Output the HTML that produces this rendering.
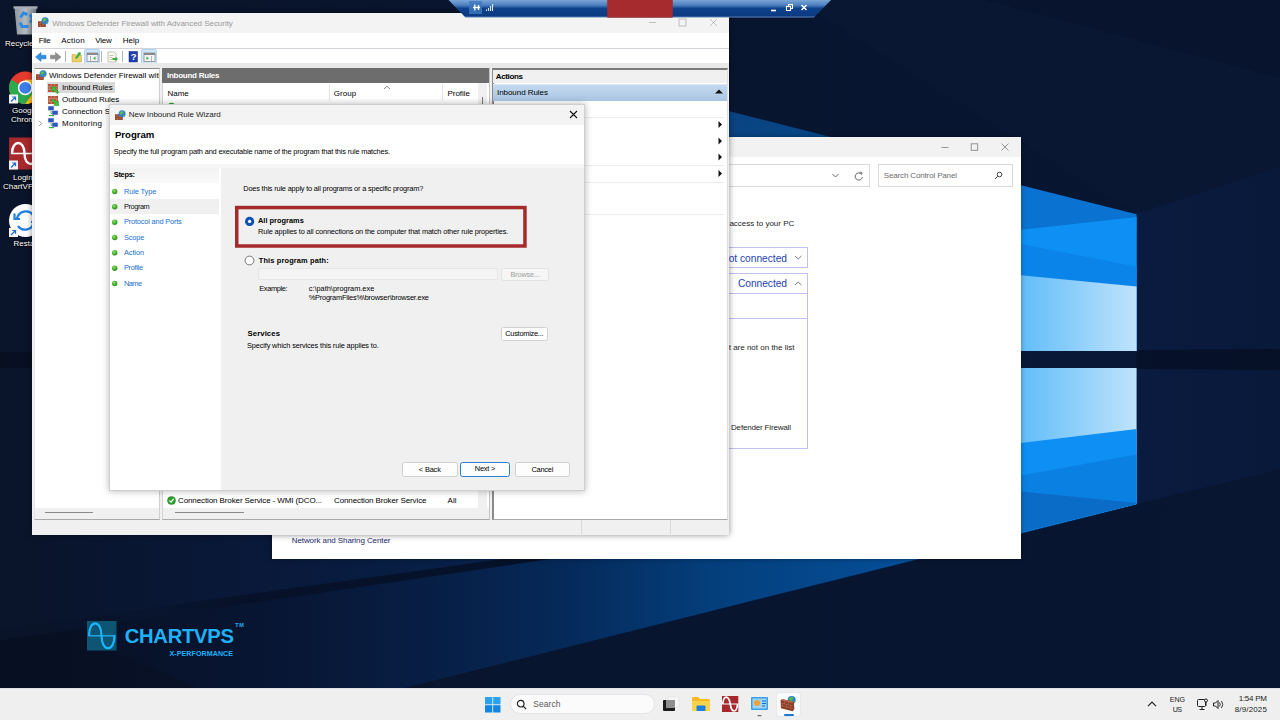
<!DOCTYPE html>
<html lang="en">
<head>
<meta charset="utf-8">
<title>Windows Defender Firewall - New Inbound Rule Wizard</title>
<style>
*{box-sizing:border-box;margin:0;padding:0}
html,body{width:1280px;height:720px;overflow:hidden;background:#0a152c}
body{position:relative;font-family:"Liberation Sans","DejaVu Sans",sans-serif;font-size:8px;color:#000;line-height:1}
.abs,.t,.d,.b{position:absolute}
.t{white-space:nowrap;line-height:10px;height:10px;font-size:8px;color:#000}
.d{font-size:7.4px;letter-spacing:-0.1px}
.b{font-weight:bold}
#wall{position:absolute;left:0;top:0}
/* firewall window */
#fw{position:absolute;left:32px;top:13px;width:697px;height:521.500px;background:#fff;box-shadow:0 0 6px rgba(0,0,0,.45)}
#cp{position:absolute;left:272px;top:137px;width:749px;height:422px;background:#fff;box-shadow:0 0 5px rgba(0,0,0,.35)}
#wz{position:absolute;left:109px;top:104px;width:476px;height:387px;background:#fff;box-shadow:0 0 7px rgba(0,0,0,.3);border:1px solid #cfcfcf}
#tb{position:absolute;left:0;top:688px;width:1280px;height:32px;background:#efefef}
.btn{position:absolute;border:1px solid #adadad;background:#e1e1e1;border-radius:2.500px;text-align:center;font-size:7.4px;line-height:13px;color:#000}
</style>
</head>
<body>
<!--WALL-->
<svg id="wall" width="1280" height="720" viewBox="0 0 1280 720">
<defs>
<linearGradient id="gbase" x1="0" y1="0" x2="1" y2="0"><stop offset="0" stop-color="#0a142a"/><stop offset=".5" stop-color="#08152f"/><stop offset="1" stop-color="#081631"/></linearGradient>
<linearGradient id="gbeamU" gradientUnits="userSpaceOnUse" x1="0" y1="0" x2="1021" y2="0"><stop offset="0" stop-color="#0a142a"/><stop offset=".4" stop-color="#09152d"/><stop offset=".6" stop-color="#0a2a5a"/><stop offset=".72" stop-color="#0a4482"/><stop offset=".82" stop-color="#054686"/><stop offset="1" stop-color="#04356f"/></linearGradient>
<linearGradient id="gbeamL" gradientUnits="userSpaceOnUse" x1="0" y1="0" x2="1136" y2="0"><stop offset="0" stop-color="#0a142a"/><stop offset=".24" stop-color="#09193a"/><stop offset=".4" stop-color="#072048"/><stop offset=".5" stop-color="#052a5a"/><stop offset=".63" stop-color="#043f7c"/><stop offset=".77" stop-color="#054c94"/><stop offset=".9" stop-color="#0762b8"/><stop offset="1" stop-color="#0a6cc8"/></linearGradient>
<linearGradient id="gp1" x1="0" y1="0" x2="1" y2="0"><stop offset="0" stop-color="#62bdf9"/><stop offset="1" stop-color="#bfe3fc"/></linearGradient>
<linearGradient id="gcone" gradientUnits="userSpaceOnUse" x1="1136" y1="0" x2="1280" y2="0"><stop offset="0" stop-color="#091b3f"/><stop offset="1" stop-color="#09193a"/></linearGradient>
</defs>
<rect width="1280" height="720" fill="url(#gbase)"/>
<!-- faint rays -->
<polygon points="796,0 1280,0 1280,167 1136,214" fill="#0a1936" opacity=".6"/>
<polygon points="985,0 1280,0 1280,78" fill="#07122a" opacity=".5"/>
<polygon points="1136,214 1280,167 1280,469 1136,504" fill="url(#gcone)"/>

<polygon points="0,340 1021,351 1280,349 1280,370 1021,368 0,377" fill="#050c1c" opacity=".6"/>
<!-- upper beam from logo top-left going up-left -->
<polygon points="0,-73.500 1021,185.200 1021,352 0,352" fill="url(#gbeamU)"/>
<!-- lower beam -->
<polygon points="1136.500,504.500 1021,368 0,368 0,600 272,721" fill="url(#gbeamL)"/>
<linearGradient id="gstripe" gradientUnits="userSpaceOnUse" x1="0" y1="0" x2="600" y2="0"><stop offset="0" stop-color="#050d1f" stop-opacity=".1"/><stop offset=".25" stop-color="#050d1f" stop-opacity=".25"/><stop offset=".4" stop-color="#050d1f" stop-opacity=".6"/><stop offset="1" stop-color="#050d1f" stop-opacity=".85"/></linearGradient>
<polygon points="502.500,559 551,559 0,640.300 0,628.800" fill="url(#gstripe)"/>
<linearGradient id="gdarkbl" gradientUnits="userSpaceOnUse" x1="0" y1="0" x2="460" y2="0"><stop offset="0" stop-color="#040a1a" stop-opacity=".5"/><stop offset="1" stop-color="#040a1a" stop-opacity="0"/></linearGradient>
<polygon points="0,640.300 460,572.400 460,721 0,721" fill="url(#gdarkbl)"/>
<!-- logo panes -->
<polygon points="1021,185.200 1136.600,214.300 1136.600,351 1021,351" fill="#0a72d0"/>
<polygon points="1021,229.700 1136.600,217 1136.600,351 1021,351" fill="#0d8ff4"/>
<polygon points="1021,244 1136.600,266.700 1136.600,351 1021,351" fill="#0a84e8"/>
<polygon points="1021,275.200 1136.600,286.600 1136.600,351 1021,351" fill="url(#gp1)"/>
<rect x="1021" y="351" width="115.600" height="17" fill="#0a1838"/>
<polygon points="1021,368 1136.600,368 1136.600,504 1021,532.500" fill="url(#gp1)"/>
<polygon points="1021,443 1136.600,428.900 1136.600,504 1021,532.500" fill="#0d8ff4"/>
<polygon points="1021,475.600 1136.600,454.500 1136.600,504 1021,532.500" fill="#0a80e2"/>
<polygon points="1021,491.500 1136.600,503 1136.600,504 1021,532.500" fill="#0a6cc6"/>
</svg>
<!--/WALL-->
<!--ICONS-->
<!-- desktop icons -->
<svg class="abs" style="left:0;top:0" width="60" height="260" viewBox="0 0 60 260">
 <defs><linearGradient id="gbin" x1="0" y1="0" x2="1" y2="0"><stop offset="0" stop-color="#8d959e"/><stop offset=".5" stop-color="#b4bac2"/><stop offset="1" stop-color="#7c848e"/></linearGradient></defs>
 <path d="M14.500 8h22l-2.500 26.500h-17z" fill="url(#gbin)"/>
 <rect x="13.500" y="6.300" width="24" height="2.300" fill="#aab0b8"/>
 <path d="M20.500 17.500l3-4.500l4 1.500M30 14.500l3 5l-3 3M28.500 26.500h-6.500l-2-4" stroke="#2c8ae0" stroke-width="3" fill="none"/>
 <!-- chrome -->
 <circle cx="25.200" cy="87.800" r="16.200" fill="#e33b2e"/>
 <path d="M25.200 87.800L11.200 79.700A16.200 16.200 0 0 0 25.200 104L33.300 92.500z" fill="#2da94f"/>
 <path d="M25.200 87.800L33.300 92.500L25.200 104A16.200 16.200 0 0 0 39.200 79.700L25.200 79.700z" fill="#fcc31c"/>
 <circle cx="25.200" cy="87.800" r="7.400" fill="#fff"/><circle cx="25.200" cy="87.800" r="5.900" fill="#3b7ded"/>
 <rect x="9" y="94.500" width="9" height="9" fill="#f4f4f4"/><path d="M11 101.500l4.500-4.500m-3.200 0h3.200v3.200" stroke="#1e6fd0" stroke-width="1.200" fill="none"/>
 <!-- chartvps login -->
 <rect x="9" y="137.500" width="32" height="32" fill="#a7282d"/>
 <path d="M12 153.500c0-14 12.500-14 12.500 0s12.500 14 12.500 0" stroke="#fff" stroke-width="2.400" fill="none"/><path d="M11 153.500h29" stroke="#fff" stroke-width="1.500"/>
 <rect x="9" y="160.500" width="9" height="9" fill="#f4f4f4"/><path d="M11 167.500l4.500-4.500m-3.200 0h3.200v3.200" stroke="#1e6fd0" stroke-width="1.200" fill="none"/>
 <!-- restart -->
 <circle cx="25.500" cy="220.500" r="16.500" fill="#fff"/>
 <path d="M17 218.500a9 9 0 0 1 16-3.500M34 222.500a9 9 0 0 1-16 3.500" stroke="#1e7fe0" stroke-width="2.400" fill="none"/>
 <path d="M14.500 213.500v5.500h5.500M36.500 227.500v-5.500h-5.500" stroke="#1e7fe0" stroke-width="2.200" fill="none"/>
 <rect x="9" y="228" width="9" height="9" fill="#f4f4f4"/><path d="M11 235l4.500-4.500m-3.200 0h3.200v3.200" stroke="#1e6fd0" stroke-width="1.200" fill="none"/>
</svg>
<span class="t" style="left:5px;top:39px;color:#fff;text-shadow:0 0 2px #000,0 1px 1px #000" id="t_rec">Recycle Bin</span>
<span class="t" style="left:12px;top:105.500px;color:#fff;text-shadow:0 0 2px #000,0 1px 1px #000" id="t_goog">Google</span>
<span class="t" style="left:11px;top:115px;color:#fff;text-shadow:0 0 2px #000,0 1px 1px #000" id="t_chro">Chrome</span>
<span class="t" style="left:13px;top:173px;color:#fff;text-shadow:0 0 2px #000,0 1px 1px #000" id="t_login">Login</span>
<span class="t" style="left:3px;top:182px;color:#fff;text-shadow:0 0 2px #000,0 1px 1px #000" id="t_cvps">ChartVPS</span>
<span class="t" style="left:13.500px;top:238.500px;color:#fff;text-shadow:0 0 2px #000,0 1px 1px #000" id="t_rest">Restart</span>
<!--/ICONS-->
<!--CP-->
<div id="cp">
 <div class="abs" style="left:0;top:0;width:749px;height:20px;background:#f2f2f2"></div>
 <!-- window controls -->
 <svg class="abs" style="left:660px;top:4px" width="86" height="14" viewBox="0 0 86 14" fill="none" stroke="#8a8a8a" stroke-width=".9">
  <path d="M9.500 6.500h7"/><rect x="39.200" y="2.800" width="6.500" height="6.500"/><path d="M69.500 2.500l7 7m0-7l-7 7"/>
 </svg>
 <!-- address bar -->
 <div class="abs" style="left:0;top:27px;width:598px;height:23px;border:1px solid #d9d9d9;border-left:0;background:#fff"></div>
 <svg class="abs" style="left:558px;top:33px" width="36" height="12" viewBox="0 0 36 12" fill="none" stroke="#555" stroke-width=".9">
  <path d="M2.500 4l3 3l3-3"/><path d="M31.500 4.200a3.600 3.600 0 1 0 .8 3"/><path d="M29.500 2.200l2.300.2l-.2 2.300" stroke-width=".8"/>
 </svg>
 <div class="abs" style="left:606px;top:27px;width:135px;height:23px;border:1px solid #d9d9d9;background:#fff"></div>
 <span class="t" style="left:611.80px;top:33.80px;color:#6d6d6d;letter-spacing:-0.150px" id="t_scp">Search Control Panel</span>
 <svg class="abs" style="left:722px;top:34px" width="9" height="9" viewBox="0 0 9 9" fill="none" stroke="#444" stroke-width="1"><circle cx="5.500" cy="3.500" r="2.300"/><path d="M3.800 5.200L1 8"/></svg>
 <span class="t" style="left:450.71px;top:82.00px;color:#1e1e1e" id="t_acc">g access to your PC</span>
 <!-- network boxes -->
 <div class="abs" style="left:300px;top:110px;width:236px;height:21px;border:1px solid #c0c0ee;background:#fff"></div>
 <span class="t" style="left:449.31px;top:114.50px;font-size:10.2px;line-height:13px;height:13px;color:#1e42b0" id="t_nc">Not connected</span>
 <div class="abs" style="left:300px;top:136px;width:236px;height:21.700px;border:1px solid #c0c0ee;background:#fff"></div>
 <span class="t" style="left:466.00px;top:140.30px;font-size:10.2px;line-height:13px;height:13px;color:#1e42b0;letter-spacing:-0.036px" id="t_c">Connected</span>
 <svg class="abs" style="left:521px;top:116px" width="10" height="36" viewBox="0 0 10 36" fill="none" stroke="#666" stroke-width=".9"><path d="M2 3l3.200 3l3.200-3"/><path d="M2 32l3.200-3l3.200 3"/></svg>
 <div class="abs" style="left:300px;top:156px;width:236px;height:26px;border:1px solid #c0c0ee;background:#fff"></div>
 <div class="abs" style="left:300px;top:181px;width:236px;height:131px;border:1px solid #c0c0ee;background:#fff"></div>
 <span class="t" style="left:456.69px;top:205.70px;color:#1e1e1e" id="t_nol">t are not on the list</span>
 <span class="t" style="left:459.00px;top:285.70px;color:#1e1e1e;letter-spacing:-0.169px" id="t_df">Defender Firewall</span>
 <span class="t" style="left:19.75px;top:399.00px;color:#1e2a6e;letter-spacing:-0.088px" id="t_nsc">Network and Sharing Center</span>
</div>
<!--/CP-->
<!--FW-->
<svg width="0" height="0" style="position:absolute">
 <defs>
  <g id="icoFw">
   <rect x="0" y="4.300" width="7.800" height="5.600" fill="#8e3b22"/>
   <path d="M0 6.200h7.800M0 8.100h7.800M2.600 4.300v1.900M5.200 6.200v1.900M2.600 8.100v1.800" stroke="#c98a6a" stroke-width=".5"/>
   <circle cx="7.100" cy="3.700" r="3.500" fill="#2f7fd6"/>
   <path d="M4.600 2.600q1.800-2.200 3.800-1q.6 1.600-1.200 2.200q-.7 1.700-2 .7zM8.200 5q1.200-.4 1.600.6q-.6 1-1.600.8z" fill="#5fc23c"/>
  </g>
  <g id="icoRule">
   <rect x="0" y="1" width="10" height="8" fill="#b9523a"/>
   <path d="M0 3.700h10M0 6.300h10M3.300 1v2.700M6.600 1v2.700M1.600 3.700v2.600M5 3.700v2.600M8.300 3.700v2.600M3.300 6.300v2.700M6.600 6.300v2.700" stroke="#e3ab94" stroke-width=".5"/>
   <path d="M3.600 3.600L8.700 4.200L7.200 5.700L10.800 9.300L9.300 10.800L5.700 7.200L4.200 8.700Z" fill="#38c838" stroke="#1d7d1d" stroke-width=".5"/>
  </g>
  <g id="icoRuleOut">
   <rect x="0" y="1" width="10" height="8" fill="#b9523a"/>
   <path d="M0 3.700h10M0 6.300h10M3.300 1v2.700M6.600 1v2.700M1.600 3.700v2.600M5 3.700v2.600M8.300 3.700v2.600M3.300 6.300v2.700M6.600 6.300v2.700" stroke="#e3ab94" stroke-width=".5"/>
   <path d="M10.800 10.800L5.700 10.200L7.200 8.700L3.800 5.300L5.300 3.800L8.700 7.200L10.200 5.700Z" fill="#38c838" stroke="#1d7d1d" stroke-width=".5"/>
  </g>
  <g id="icoMon">
   <rect x="0" y="0" width="6" height="4.500" fill="#2b56c4" stroke="#d8d8e8" stroke-width=".6"/>
   <rect x="4" y="4.500" width="6" height="4.500" fill="#2b56c4" stroke="#d8d8e8" stroke-width=".6"/>
   <path d="M3 4.500v3h1" stroke="#3a3" stroke-width=".8" fill="none"/>
   <rect x="1" y="9" width="5" height="1.200" fill="#4a4"/>
  </g>
 </defs>
</svg>
<div id="fw">
 <div class="abs" style="left:0;top:0;width:697px;height:19.500px;background:#f3f3f3"></div>
 <svg class="abs" style="left:5.500px;top:4px" width="11" height="10" viewBox="0 0 11 10"><use href="#icoFw"/></svg>
 <span class="t" style="left:20.25px;top:5.50px;color:#9a9a9a;letter-spacing:-0.037px" id="t_title">Windows Defender Firewall with Advanced Security</span>
 <svg class="abs" style="left:613px;top:4px" width="76" height="12" viewBox="0 0 76 12" fill="none" stroke="#adadad" stroke-width=".75">
  <path d="M4 5.500h7"/><rect x="34" y="2" width="7" height="7"/><path d="M65 2l7 7m0-7l-7 7"/>
 </svg>
 <!-- menu -->
 <span class="t" style="left:6.75px;top:22.500px;letter-spacing:-0.351px" id="t_file">File</span>
 <span class="t" style="left:29.25px;top:22.500px;letter-spacing:0.222px" id="t_action">Action</span>
 <span class="t" style="left:63.25px;top:22.500px;letter-spacing:-0.185px" id="t_view">View</span>
 <span class="t" style="left:90.75px;top:22.500px;letter-spacing:-0.038px" id="t_help">Help</span>
 <div class="abs" style="left:0;top:35px;width:697px;height:1px;background:#d2d2d8"></div>
 <!-- toolbar -->
 <svg class="abs" style="left:0;top:35px" width="160" height="16" viewBox="0 0 160 16">
  <path d="M3.500 9l5.500-4.500v2.700h5v3.600h-5v2.700z" fill="#2f8fe0" stroke="#1f6fc0" stroke-width=".5"/>
  <path d="M29 9l-5.500-4.500v2.700h-5v3.600h5v2.700z" fill="#8e8e8e" stroke="#777" stroke-width=".5"/>
  <path d="M33.500 3v11M69.500 3v11M90.500 3v11" stroke="#b4b4b4" stroke-width="1"/>
  <path d="M40 6.500h3.500l1 1h5v6.500h-9.500z" fill="#ecd06a" stroke="#b89a30" stroke-width=".5"/>
  <path d="M43 10l3-4.500l-1-.5l3.500-1l.3 3.500l-1-.6l-3 4z" fill="#3cb043"/>
  <rect x="52.500" y="1.500" width="15" height="14" rx="1.500" fill="#cde6fa" stroke="#9fcdf2" stroke-width=".8"/>
  <rect x="55" y="5" width="11" height="8.500" fill="#f4f4f4" stroke="#8a8a8a" stroke-width=".8"/><rect x="55" y="5" width="11" height="2" fill="#8a8a8a"/>
  <path d="M58.500 8v5" stroke="#8a8a8a" stroke-width=".6"/><path d="M63.500 8.500v3.500l-2.500-1.750z" fill="#3cb043"/>
  <path d="M76 4h6l2 2v8h-8z" fill="#fbfbf2" stroke="#9a9a8a" stroke-width=".6"/>
  <path d="M77.500 7.500h4M77.500 9.500h3M77.500 11.500h3" stroke="#9a9a8a" stroke-width=".6"/>
  <path d="M80.500 10h3v-1.500l2.500 2.500l-2.500 2.500v-1.500h-3z" fill="#3cb043"/>
  <rect x="97" y="3.500" width="8.500" height="10.500" fill="#1f3fb0" stroke="#14287a" stroke-width=".5"/>
  <rect x="109.500" y="1.500" width="15" height="14" rx="1.500" fill="#cde6fa" stroke="#9fcdf2" stroke-width=".8"/>
  <rect x="112" y="5" width="11" height="8.500" fill="#f4f4f4" stroke="#8a8a8a" stroke-width=".8"/><rect x="112" y="5" width="11" height="2" fill="#8a8a8a"/>
  <path d="M119.500 8v5" stroke="#8a8a8a" stroke-width=".6"/><path d="M114.500 8.500v3.500l2.500-1.750z" fill="#3cb043"/>
 </svg>
 <span class="t b" style="left:98.700px;top:39.300px;color:#fff;font-size:9.500px" id="t_q">?</span>
 <div class="abs" style="left:0;top:50px;width:697px;height:471.500px;background:#f0f0f0"></div>
 <div class="abs" style="left:0;top:50px;width:697px;height:4.500px;background:#e9e9e9"></div>
 <!-- tree pane -->
 <div class="abs" style="left:1.500px;top:54.500px;width:126px;height:452px;background:#fff;border:1px solid #a9a9a9;border-top-color:#8a8a8a;border-left-color:#e4e4e4;border-right-color:#cfcfcf"></div>
 <div class="abs" style="left:2.500px;top:494.500px;width:124px;height:11px;background:#f0f0f0"></div>
 <div class="abs" style="left:13px;top:499px;width:48px;height:1px;background:#8a8a8a"></div>
 <svg class="abs" style="left:4px;top:56.500px" width="11" height="10" viewBox="0 0 11 10"><use href="#icoFw"/></svg>
 <div class="abs" style="left:17px;top:57.600px;width:110px;height:11px;overflow:hidden"><span class="t" style="left:0;top:0" id="t_root">Windows Defender Firewall with Advanced Security on Local Computer</span></div>
 <div class="abs" style="left:15px;top:69px;width:68px;height:10.500px;background:#d9d9d9"></div>
 <svg class="abs" style="left:16px;top:69.500px" width="11.500" height="11.500" viewBox="0 0 11.500 11.500"><use href="#icoRule"/></svg>
 <span class="t" style="left:29.91px;top:69.70px;letter-spacing:-0.063px" id="t_in">Inbound Rules</span>
 <svg class="abs" style="left:16px;top:81.500px" width="11.500" height="11.500" viewBox="0 0 11.500 11.500"><use href="#icoRuleOut"/></svg>
 <span class="t" style="left:30.00px;top:81.70px;letter-spacing:-0.044px" id="t_out">Outbound Rules</span>
 <svg class="abs" style="left:16px;top:93px" width="11" height="11" viewBox="0 0 11 11"><use href="#icoMon"/></svg>
 <div class="abs" style="left:30px;top:93.700px;width:47px;height:11px;overflow:hidden"><span class="t" style="left:0;top:0" id="t_csr">Connection Security Rules</span></div>
 <svg class="abs" style="left:6px;top:107px" width="5" height="7" viewBox="0 0 5 7" fill="none" stroke="#8a8a8a" stroke-width=".9"><path d="M1 .8l2.700 2.700l-2.700 2.700"/></svg>
 <svg class="abs" style="left:16px;top:105px" width="11" height="11" viewBox="0 0 11 11"><use href="#icoMon"/></svg>
 <span class="t" style="left:30.00px;top:105.60px;letter-spacing:0.293px" id="t_mon">Monitoring</span>
 <!-- center pane -->
 <div class="abs" style="left:130px;top:54.500px;width:328px;height:452px;background:#fff;border:1px solid #a9a9a9;border-left-color:#d4d4d4;border-right-color:#c4c4c4"></div>
 <div class="abs" style="left:130px;top:55px;width:327px;height:14.500px;background:#6d6d6d"></div>
 <span class="t b" style="left:134.91px;top:57.80px;color:#fff;letter-spacing:-0.246px" id="t_inh">Inbound Rules</span>
 <span class="t" style="left:135.50px;top:75.50px;letter-spacing:-0.031px" id="t_name">Name</span>
 <span class="t" style="left:301.75px;top:75.50px;letter-spacing:0.063px" id="t_group">Group</span>
 <span class="t" style="left:415.50px;top:75.50px;letter-spacing:-0.031px" id="t_profile">Profile</span>
 <svg class="abs" style="left:351px;top:71.700px" width="8" height="5" viewBox="0 0 8 5" fill="none" stroke="#666" stroke-width=".8"><path d="M1 4l3-2.800l3 2.800"/></svg>
 <div class="abs" style="left:296.500px;top:71px;width:1px;height:17px;background:#e5e5e5"></div>
 <div class="abs" style="left:409.500px;top:71px;width:1px;height:17px;background:#e5e5e5"></div>
  <div class="abs" style="left:446px;top:70px;width:9px;height:425px;background:#f0f0f0"></div>
 <div class="abs" style="left:450px;top:84px;width:1px;height:10px;background:#777"></div>
 <!-- last row -->
 <svg class="abs" style="left:135px;top:483px" width="9" height="9" viewBox="0 0 9 9"><circle cx="4.500" cy="4.500" r="4" fill="#2ea12e" stroke="#1c7a1c" stroke-width=".5"/><path d="M2.400 4.600l1.600 1.600l2.700-3.300" stroke="#fff" stroke-width="1.200" fill="none"/></svg>
 <span class="t" style="left:146.00px;top:482.500px;letter-spacing:-0.106px" id="t_cbs1">Connection Broker Service - WMI (DCO...</span>
 <span class="t" style="left:302.00px;top:482.500px;letter-spacing:-0.111px" id="t_cbs2">Connection Broker Service</span>
 <span class="t" style="left:415.50px;top:482.500px;letter-spacing:0.051px" id="t_all">All</span>
 <div class="abs" style="left:131px;top:494.500px;width:326px;height:11px;background:#f0f0f0"></div>
 <div class="abs" style="left:143px;top:499px;width:69px;height:1px;background:#8a8a8a"></div>
 <!-- actions pane -->
 <div class="abs" style="left:460px;top:54.500px;width:236px;height:452px;background:#fff;border:1px solid #a9a9a9;border-top:2px solid #7a7a7a;border-right-color:#dedede;border-left:2px solid #8a8a8a"></div>
 <div class="abs" style="left:461px;top:56.500px;width:234px;height:13.500px;background:#f0f0f0"></div>
 <span class="t b" style="left:463.75px;top:59.00px;letter-spacing:-0.350px" id="t_actions">Actions</span>
 <div class="abs" style="left:461px;top:71px;width:234px;height:16.500px;background:linear-gradient(#c4d9ee,#a9c5e3);border-top:1px solid #dbe8f5"></div>
 <span class="t" style="left:465.00px;top:74.500px;letter-spacing:-0.050px" id="t_inr">Inbound Rules</span>
 <svg class="abs" style="left:683px;top:76px" width="8" height="5" viewBox="0 0 8 5"><path d="M0 4.500l4-4l4 4z" fill="#111"/></svg>
 <svg class="abs" style="left:685.800px;top:108.200px" width="5" height="58" viewBox="0 0 5 58" fill="#111"><path d="M.5 0l3.500 3.500l-3.500 3.500zM.5 16.500l3.500 3.500l-3.500 3.500zM.5 32.500l3.500 3.500l-3.500 3.500zM.5 49l3.500 3.500l-3.500 3.500z"/></svg>
 <div class="abs" style="left:466px;top:103.500px;width:226px;height:1px;background:#ececec"></div>
 <div class="abs" style="left:466px;top:152px;width:226px;height:1px;background:#ececec"></div>
 <div class="abs" style="left:466px;top:168.500px;width:226px;height:1px;background:#ececec"></div>
 <div class="abs" style="left:466px;top:201px;width:226px;height:1px;background:#ececec"></div>
 <svg class="abs" style="left:464px;top:89.500px" width="10" height="4" viewBox="0 0 10 4"><path d="M0 4l3-3l3 3z" fill="#f0b040"/></svg>
 <svg class="abs" style="left:135px;top:89.300px" width="9" height="2" viewBox="0 0 9 2"><path d="M1.500 2a3.500 2.500 0 0 1 6 0z" fill="#2ea12e"/></svg>
 <!-- status bar -->
 <div class="abs" style="left:549px;top:507px;width:1px;height:14px;background:#d9d9d9"></div>
 <div class="abs" style="left:638px;top:507px;width:1px;height:14px;background:#d9d9d9"></div>
</div>
<!--/FW-->
<!--WZ-->
<div id="wz">
 <div class="abs" style="left:0;top:0;width:474px;height:19.500px;background:#f3f3f3"></div>
 <svg class="abs" style="left:5px;top:4.500px" width="11" height="10" viewBox="0 0 11 10"><use href="#icoFw"/></svg>
 <span class="t" style="left:18.75px;top:5px;color:#1a1a1a;letter-spacing:-0.043px" id="t_wzt">New Inbound Rule Wizard</span>
 <svg class="abs" style="left:459.300px;top:4.900px" width="9" height="9" viewBox="0 0 9 9" fill="none" stroke="#111" stroke-width="1.100"><path d="M1 1l7 7m0-7l-7 7"/></svg>
 <!-- header -->
 <span class="t b" style="left:5.00px;top:24px;font-size:9.600px;line-height:12px;height:12px;color:#000;letter-spacing:-0.034px" id="t_prog">Program</span>
 <span class="t d" style="left:3.75px;top:41.60px;letter-spacing:-0.173px" id="t_desc">Specify the full program path and executable name of the program that this rule matches.</span>
 <div class="abs" style="left:0;top:59px;width:474px;height:4px;background:#f6f6f6"></div>
 <!-- steps -->
 <div class="abs" style="left:0;top:63px;width:109px;height:14.500px;background:linear-gradient(#f2f2f2,#fafafa)"></div>
 <span class="t d b" style="left:3.75px;top:65.40px;letter-spacing:-0.268px" id="t_steps">Steps:</span>
 <div class="abs" style="left:0;top:94px;width:109px;height:15px;background:#f0f0f0"></div>
 <svg class="abs" style="left:1.300px;top:83px" width="7" height="100" viewBox="0 0 7 100">
  <defs><radialGradient id="gb" cx=".4" cy=".35" r=".7"><stop offset="0" stop-color="#8fe070"/><stop offset=".6" stop-color="#3fae2a"/><stop offset="1" stop-color="#2a8a1e"/></radialGradient></defs>
  <circle cx="3.700" cy="3.500" r="2.700" fill="url(#gb)"/><circle cx="3.700" cy="18.800" r="2.700" fill="url(#gb)"/><circle cx="3.700" cy="34.200" r="2.700" fill="url(#gb)"/><circle cx="3.700" cy="49.500" r="2.700" fill="url(#gb)"/><circle cx="3.700" cy="64.800" r="2.700" fill="url(#gb)"/><circle cx="3.700" cy="80.200" r="2.700" fill="url(#gb)"/><circle cx="3.700" cy="95.500" r="2.700" fill="url(#gb)"/>
 </svg>
 <span class="t d" style="left:14.00px;top:81.500px;color:#1a6fd0;letter-spacing:-0.112px" id="t_s1">Rule Type</span>
 <span class="t d" style="left:14.00px;top:97px;color:#111;letter-spacing:-0.434px" id="t_s2">Program</span>
 <span class="t d" style="left:14.00px;top:112.200px;color:#1a6fd0;letter-spacing:-0.179px" id="t_s3">Protocol and Ports</span>
 <span class="t d" style="left:14.00px;top:127.500px;color:#1a6fd0;letter-spacing:-0.178px" id="t_s4">Scope</span>
 <span class="t d" style="left:14.00px;top:142.800px;color:#1a6fd0;letter-spacing:-0.108px" id="t_s5">Action</span>
 <span class="t d" style="left:14.00px;top:158px;color:#1a6fd0;letter-spacing:-0.327px" id="t_s6">Profile</span>
 <span class="t d" style="left:14.00px;top:173.500px;color:#1a6fd0;letter-spacing:-0.575px" id="t_s7">Name</span>
 <!-- content -->
 <div class="abs" style="left:111px;top:63px;width:363px;height:322px;background:#f0f0f0"></div>
 <span class="t d" style="left:133.25px;top:78.500px;letter-spacing:-0.190px" id="t_qq">Does this rule apply to all programs or a specific program?</span>
 <svg class="abs" style="left:120px;top:96px" width="304" height="52" viewBox="0 0 304 52"><rect x="6.750" y="6.550" width="288.200" height="38.450" fill="none" stroke="#a52a2c" stroke-width="3.500"/></svg>
 <svg class="abs" style="left:134px;top:110.500px" width="11" height="11" viewBox="0 0 11 11"><circle cx="5.600" cy="5.400" r="4.600" fill="#0a4fb4"/><circle cx="5.600" cy="5.400" r="1.700" fill="#fff"/></svg>
 <span class="t d b" style="left:148.00px;top:111.10px;letter-spacing:0.014px" id="t_allp">All programs</span>
 <span class="t d" style="left:148.00px;top:122.20px;letter-spacing:-0.148px" id="t_rule">Rule applies to all connections on the computer that match other rule properties.</span>
 <svg class="abs" style="left:134px;top:150px" width="11" height="11" viewBox="0 0 11 11"><circle cx="5.500" cy="5.500" r="4.400" fill="#fff" stroke="#555" stroke-width=".8"/></svg>
 <span class="t d b" style="left:148.76px;top:150.500px;letter-spacing:0.156px" id="t_tpp">This program path:</span>
 <div class="abs" style="left:148px;top:162.500px;width:240px;height:12px;background:#f4f4f4;border:1px solid #e6e6e6"></div>
 <div class="btn" style="left:391px;top:162.700px;width:48px;height:13px;background:#f6f6f6;border-color:#e2e2e2;color:#a0a0a0;line-height:11px;letter-spacing:-0.196px" id="t_browse">Browse...</div>
 <span class="t d" style="left:149.25px;top:178.80px;letter-spacing:-0.366px" id="t_ex">Example:</span>
 <span class="t d" style="left:198.76px;top:178.80px;letter-spacing:-0.013px" id="t_ex1">c:\path\program.exe</span>
 <span class="t d" style="left:198.76px;top:187.50px;letter-spacing:-0.215px" id="t_ex2">%ProgramFiles%\browser\browser.exe</span>
 <span class="t d b" style="left:137.50px;top:224px;font-size:7.800px;letter-spacing:0.060px" id="t_svc">Services</span>
 <span class="t d" style="left:137.00px;top:235.500px;letter-spacing:-0.146px" id="t_svcd">Specify which services this rule applies to.</span>
 <div class="btn" style="left:390.500px;top:221.500px;width:47.500px;height:14px;background:#fdfdfd;border-color:#d0d0d0;line-height:12px;letter-spacing:-0.258px" id="t_cust">Customize...</div>
 <div class="btn" style="left:292px;top:356.500px;width:55.500px;height:15px;background:#fdfdfd;border-color:#d0d0d0;letter-spacing:-0.161px" id="t_back">&lt; Back</div>
 <div class="btn" style="left:350px;top:356.500px;width:50px;height:15px;background:#fdfdfd;border:1.500px solid #2b7fd0;line-height:12.500px;letter-spacing:-0.193px" id="t_next">Next &gt;</div>
 <div class="btn" style="left:404.500px;top:356.500px;width:55.500px;height:15px;background:#fdfdfd;border-color:#d0d0d0;letter-spacing:-0.222px" id="t_cancel">Cancel</div>
</div>
<!--/WZ-->
<!--RDP-->
<!-- RDP connection bar -->
<svg class="abs" style="left:445px;top:0" width="390" height="19" viewBox="0 0 390 19">
 <defs><linearGradient id="grdp" x1="0" y1="0" x2="0" y2="1"><stop offset="0" stop-color="#7aa5d6"/><stop offset=".3" stop-color="#4c7fbe"/><stop offset=".48" stop-color="#0f418c"/><stop offset=".9" stop-color="#0b3a82"/><stop offset="1" stop-color="#5d86bd"/></linearGradient></defs>
 <polygon points="3.500,0 386,0 369,17.500 20.500,17.500" fill="url(#grdp)"/>
 <rect x="162.200" y="0" width="65.600" height="17.700" fill="#a62b2f"/>
 <rect x="24" y="1" width="13" height="13" fill="#3f78c0" opacity=".8"/>
 <path d="M28 7.500h7M29.800 4.500v6M33.500 5v5" stroke="#fff" stroke-width="1.300" fill="none"/>
 <path d="M41.500 11v-1.500M43.500 11v-3M45.500 11v-5M47.500 11v-7" stroke="#dfe9f6" stroke-width="1.100"/>
 <path d="M326 10.500h5" stroke="#fff" stroke-width="1.600"/>
 <path d="M341.500 6.500h4v4h-4z M343.500 6.500v-2h4v4h-2" stroke="#fff" stroke-width="1.100" fill="none"/>
 <path d="M356.500 5l5 5m0-5l-5 5" stroke="#fff" stroke-width="1.500"/>
</svg>
<!--/RDP-->
<!--LOGO-->
<!-- ChartVPS watermark -->
<svg class="abs" style="left:87px;top:621px" width="30" height="30" viewBox="0 0 30 30">
 <rect width="29.500" height="29.500" fill="#0d5573"/>
 <path d="M1.500 14.800h27" stroke="#1eb4fb" stroke-width="1.300"/>
 <path d="M2 14.800c0-16.500 12.500-16.500 12.500 0s13 16.500 13 0" stroke="#1eb4fb" stroke-width="2.200" fill="none"/>
</svg>
<span class="t b" style="left:124.71px;top:624px;font-size:20.200px;line-height:24px;height:24px;color:#1fb2fa;letter-spacing:-0.251px" id="t_cv">CHARTVPS</span>
<span class="t b" style="left:235.30px;top:622px;font-size:5.500px;line-height:7px;height:7px;color:#1fb2fa;letter-spacing:0.506px" id="t_tm">TM</span>
<span class="t b" style="left:169.50px;top:649.80px;font-size:7.1px;line-height:9px;height:9px;color:#1fb2fa;letter-spacing:0.069px" id="t_xp">X-PERFORMANCE</span>
<!--/LOGO-->
<!--TB-->
<div id="tb">
 <div class="abs" style="left:0;top:0;width:1280px;height:1px;background:#dfe2e6"></div>
 <svg class="abs" style="left:484.500px;top:8.500px" width="16" height="16" viewBox="0 0 16 16"><rect x="0" y="0" width="7.300" height="7.300" fill="#2aa2f0"/><rect x="8.200" y="0" width="7.300" height="7.300" fill="#2aa2f0"/><rect x="0" y="8.200" width="7.300" height="7.300" fill="#1486e0"/><rect x="8.200" y="8.200" width="7.300" height="7.300" fill="#1486e0"/></svg>
 <div class="abs" style="left:509.500px;top:5.500px;width:145px;height:20.500px;border-radius:10.500px;background:#fbfbfc;border:1px solid #e3e5e8"></div>
 <svg class="abs" style="left:516px;top:10.500px" width="11" height="11" viewBox="0 0 11 11" fill="none" stroke="#222" stroke-width="1.200"><circle cx="4.700" cy="4.700" r="3.300"/><path d="M7.200 7.200l3 3"/></svg>
 <span class="t" style="left:533.30px;top:11px;color:#5a5a5a;font-size:8.500px;letter-spacing:0.054px" id="t_search">Search</span>
 <!-- task view -->
 <svg class="abs" style="left:662px;top:8px" width="19" height="16" viewBox="0 0 19 16"><rect x="5.500" y=".800" width="11.500" height="10.500" rx="1" fill="#f6f6f6" stroke="#dcdcdc" stroke-width=".6"/><rect x="1" y="4" width="12" height="11" rx="1" fill="#1a1a1a"/><rect x="4" y="4" width="9" height="8" fill="#8e8e8e"/></svg>
 <!-- explorer -->
 <svg class="abs" style="left:692px;top:8px" width="18" height="16" viewBox="0 0 18 16"><path d="M0 2.500q0-1.500 1.500-1.500h4.500l2 2h8.500q1.500 0 1.500 1.500v9q0 1.500-1.500 1.500h-15q-1.500 0-1.500-1.500z" fill="#f5b921"/><path d="M0 5h18v8.500q0 1.500-1.500 1.500h-15q-1.500 0-1.500-1.500z" fill="#fbd24c"/><rect x="4.500" y="9.500" width="9" height="5.500" rx="1" fill="#1a7fe0"/></svg>
 <!-- chartvps -->
 <svg class="abs" style="left:721.800px;top:7.700px" width="17" height="17" viewBox="0 0 17 17"><rect width="16.300" height="16" fill="#a7282d"/><path d="M.8 8C1.500 -1.300 6.800 -1.300 8.200 8S14.800 17.300 15.500 8" stroke="#fff" stroke-width="1.700" fill="none"/><path d="M0 8h16.300" stroke="#fff" stroke-width="1"/></svg>
 <!-- control panel -->
 <svg class="abs" style="left:750.500px;top:9px" width="18" height="20" viewBox="0 0 18 20"><rect x="0" y="0" width="17" height="13" rx="1" fill="#3aa0e8"/><rect x="1.500" y="1.500" width="14" height="10" fill="#9bd4f8"/><circle cx="6" cy="6" r="3" fill="#f0a030"/><path d="M11 4h4M11 6.500h4M11 9h3" stroke="#1a6fc0" stroke-width="1"/><rect x="6.500" y="18" width="4" height="1.300" rx=".6" fill="#6a6a6a"/></svg>
 <!-- firewall active -->
 <div class="abs" style="left:775.500px;top:4px;width:25.500px;height:25px;border-radius:3px;background:#fafbfc;border:1px solid #e6e8ea"></div>
 <svg class="abs" style="left:779px;top:6px" width="20" height="20" viewBox="0 0 20 20"><circle cx="12.700" cy="5.900" r="4" fill="#2a7fd8"/><path d="M10 4.500q2-2.600 4.300-1.200q.7 1.800-1.400 2.500q-.8 1.900-2.300.8z" fill="#4fc23c"/><path d="M14.200 7.200q1.400-.5 1.900.7q-.7 1.200-1.900 1z" fill="#4fc23c"/>
<polygon points="1.600,6.300 3.200,5.200 14.800,7.600 15.300,15 13.800,17.200 2,14.200" fill="#8c3d25"/><polygon points="1.600,6.300 3.200,5.200 14.800,7.600 13.500,9" fill="#b8694a"/><path d="M1.800 9l11.800 2.800M1.900 11.700l11.800 2.800M5.500 7.200l.1 2.700M9.500 8.200l.1 2.700M3.600 9.500l.1 2.700M7.600 10.500l.1 2.700M11.600 11.400l.1 2.700" stroke="#c98a6a" stroke-width=".5" opacity=".8"/></svg>
 <div class="abs" style="left:783.500px;top:26px;width:10px;height:2px;border-radius:1px;background:#1a78d8"></div>
 <!-- tray -->
 <svg class="abs" style="left:1147px;top:13px" width="10" height="6" viewBox="0 0 10 6" fill="none" stroke="#222" stroke-width="1.200"><path d="M1 5.200l4-4l4 4"/></svg>
 <span class="t" style="left:1169.75px;top:6.500px;color:#222;letter-spacing:-0.063px;font-size:7.1px" id="t_eng">ENG</span>
 <span class="t" style="left:1172.75px;top:17px;color:#222;letter-spacing:-0.609px;font-size:7.1px" id="t_us">US</span>
 <svg class="abs" style="left:1196px;top:9.500px" width="30" height="13" viewBox="0 0 30 13" fill="none" stroke="#222" stroke-width="1"><rect x="1.500" y="1.500" width="8" height="7" rx="1"/><path d="M3.500 11.500h5M6 8.500v3"/><circle cx="10" cy="2.500" r="1.500" fill="#efefef"/><path d="M10 4v4"/><path d="M17.500 5h2l2.500-2.500v8l-2.500-2.500h-2z"/><path d="M23.500 4.500q1.500 2 0 4M25.500 3q2.500 3.500 0 7" stroke-width=".9"/></svg>
 <span class="t" style="left:1238.76px;top:6px;color:#222;letter-spacing:-0.276px" id="t_time">1:54 PM</span>
 <span class="t" style="left:1234.76px;top:16.800px;color:#222;letter-spacing:0.144px" id="t_date">8/9/2025</span>
</div>
<!--/TB-->
</body>
</html>
